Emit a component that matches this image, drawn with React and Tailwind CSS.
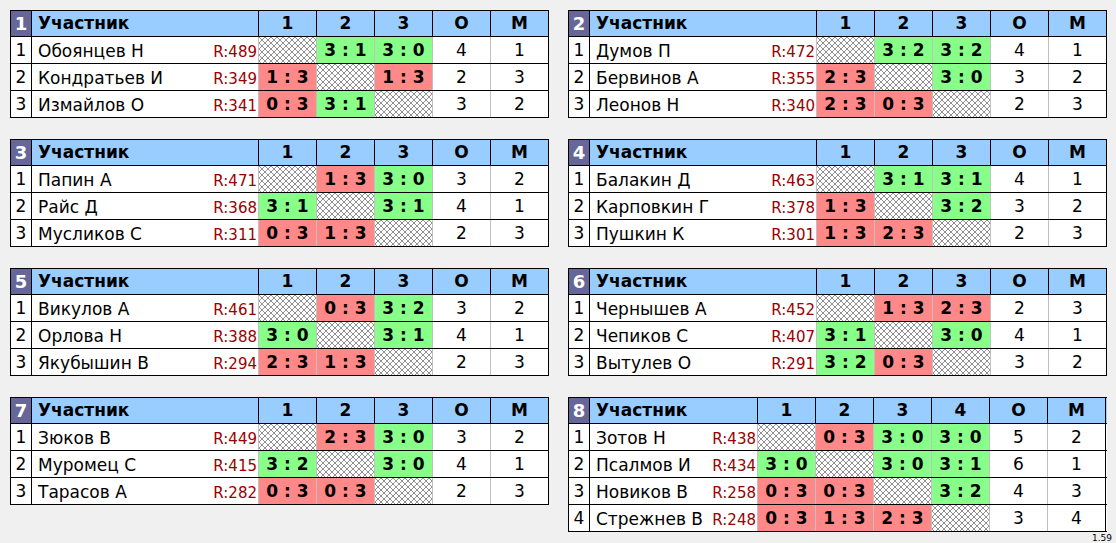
const groups = [
  {
    n: 1,
    rows: [
      ["Обоянцев Н", 489, [null, "3:1", "3:0"], 4, 1],
      ["Кондратьев И", 349, ["1:3", null, "1:3"], 2, 3],
      ["Измайлов О", 341, ["0:3", "3:1", null], 3, 2],
    ],
  },
  {
    n: 2,
    rows: [
      ["Думов П", 472, [null, "3:2", "3:2"], 4, 1],
      ["Бервинов А", 355, ["2:3", null, "3:0"], 3, 2],
      ["Леонов Н", 340, ["2:3", "0:3", null], 2, 3],
    ],
  },
  {
    n: 3,
    rows: [
      ["Папин А", 471, [null, "1:3", "3:0"], 3, 2],
      ["Райс Д", 368, ["3:1", null, "3:1"], 4, 1],
      ["Мусликов С", 311, ["0:3", "1:3", null], 2, 3],
    ],
  },
  {
    n: 4,
    rows: [
      ["Балакин Д", 463, [null, "3:1", "3:1"], 4, 1],
      ["Карповкин Г", 378, ["1:3", null, "3:2"], 3, 2],
      ["Пушкин К", 301, ["1:3", "2:3", null], 2, 3],
    ],
  },
  {
    n: 5,
    rows: [
      ["Викулов А", 461, [null, "0:3", "3:2"], 3, 2],
      ["Орлова Н", 388, ["3:0", null, "3:1"], 4, 1],
      ["Якубышин В", 294, ["2:3", "1:3", null], 2, 3],
    ],
  },
  {
    n: 6,
    rows: [
      ["Чернышев А", 452, [null, "1:3", "2:3"], 2, 3],
      ["Чепиков С", 407, ["3:1", null, "3:0"], 4, 1],
      ["Вытулев О", 291, ["3:2", "0:3", null], 3, 2],
    ],
  },
  {
    n: 7,
    rows: [
      ["Зюков В", 449, [null, "2:3", "3:0"], 3, 2],
      ["Муромец С", 415, ["3:2", null, "3:0"], 4, 1],
      ["Тарасов А", 282, ["0:3", "0:3", null], 2, 3],
    ],
  },
  {
    n: 8,
    rows: [
      ["Зотов Н", 438, [null, "0:3", "3:0", "3:0"], 5, 2],
      ["Псалмов И", 434, ["3:0", null, "3:0", "3:1"], 6, 1],
      ["Новиков В", 258, ["0:3", "0:3", null, "3:2"], 4, 3],
      ["Стрежнев В", 248, ["0:3", "1:3", "2:3", null], 3, 4],
    ],
  },
];

// diagonal cross-hatch for the "self" cells
const hatch =
  "bg-white bg-[linear-gradient(45deg,transparent_42%,#909090_42%,#909090_58%,transparent_58%),linear-gradient(-45deg,transparent_42%,#909090_42%,#909090_58%,transparent_58%)] bg-[length:6px_6px]";

function Score({ value }) {
  if (!value) {
    return <div className={`w-[58px] h-full border-r border-[#c0c0c0] ${hatch}`} />;
  }
  const [a, b] = value.split(":").map(Number);
  const win = a > b;
  return (
    <div
      className={`w-[58px] h-full border-r border-[#c0c0c0] flex items-center justify-center pt-[2px] font-bold text-[17px] ${
        win ? "bg-[#88ff88]" : "bg-[#ff8888]"
      }`}
    >
      {a} : {b}
    </div>
  );
}

function Group({ group }) {
  const size = group.rows.length;
  const nameW = size === 4 ? "w-[168px]" : "w-[227px]";
  const cols = Array.from({ length: size }, (_, i) => i + 1);
  return (
    <div className="border-t border-l border-black bg-white w-[539px]">
      <div className="flex h-[26px] border-b border-black bg-[#99ccff] font-bold text-[17px]">
        <div className="w-[21px] border-r border-black bg-[#666699] text-white flex items-center justify-center text-[18px]">
          {group.n}
        </div>
        <div className={`${nameW} border-r border-black flex items-center pl-[6px]`}>Участник</div>
        {cols.map((c) => (
          <div key={c} className="w-[58px] border-r border-black flex items-center justify-center">
            {c}
          </div>
        ))}
        <div className="w-[58px] border-r border-black flex items-center justify-center">О</div>
        <div className="w-[58px] border-r border-black flex items-center justify-center">М</div>
      </div>
      {group.rows.map(([name, rating, scores, pts, place], i) => (
        <div key={name} className="flex h-[27px] border-b border-black text-[17px]">
          <div className="w-[21px] border-r border-black flex items-center justify-center pt-[2px]">
            {i + 1}
          </div>
          <div
            className={`${nameW} border-r border-[#c0c0c0] flex items-end justify-between pl-[6px] pr-[1px] pb-[2px]`}
          >
            <span className="leading-[20px]">{name}</span>
            <span className="text-[15px] leading-[18px] text-[#990000]">R:{rating}</span>
          </div>
          {scores.map((s, j) => (
            <Score key={j} value={s} />
          ))}
          <div className="w-[58px] border-r border-[#c0c0c0] flex items-center justify-center pt-[2px]">
            {pts}
          </div>
          <div className="w-[58px] border-r border-black flex items-center justify-center pt-[2px]">
            {place}
          </div>
        </div>
      ))}
    </div>
  );
}

export default function App() {
  return (
    <div className="min-h-[543px] bg-[#f0f0f0] pt-[10px] pl-[10px] text-black font-['DejaVu_Sans',sans-serif]">
      <div className="grid grid-cols-[539px_539px] gap-x-[19px] gap-y-[21px] items-start">
        {groups.map((g) => (
          <Group key={g.n} group={g} />
        ))}
      </div>
      <div className="w-[1102px] text-right text-[9px] leading-[10px] pt-[1px]">1.59</div>
    </div>
  );
}
